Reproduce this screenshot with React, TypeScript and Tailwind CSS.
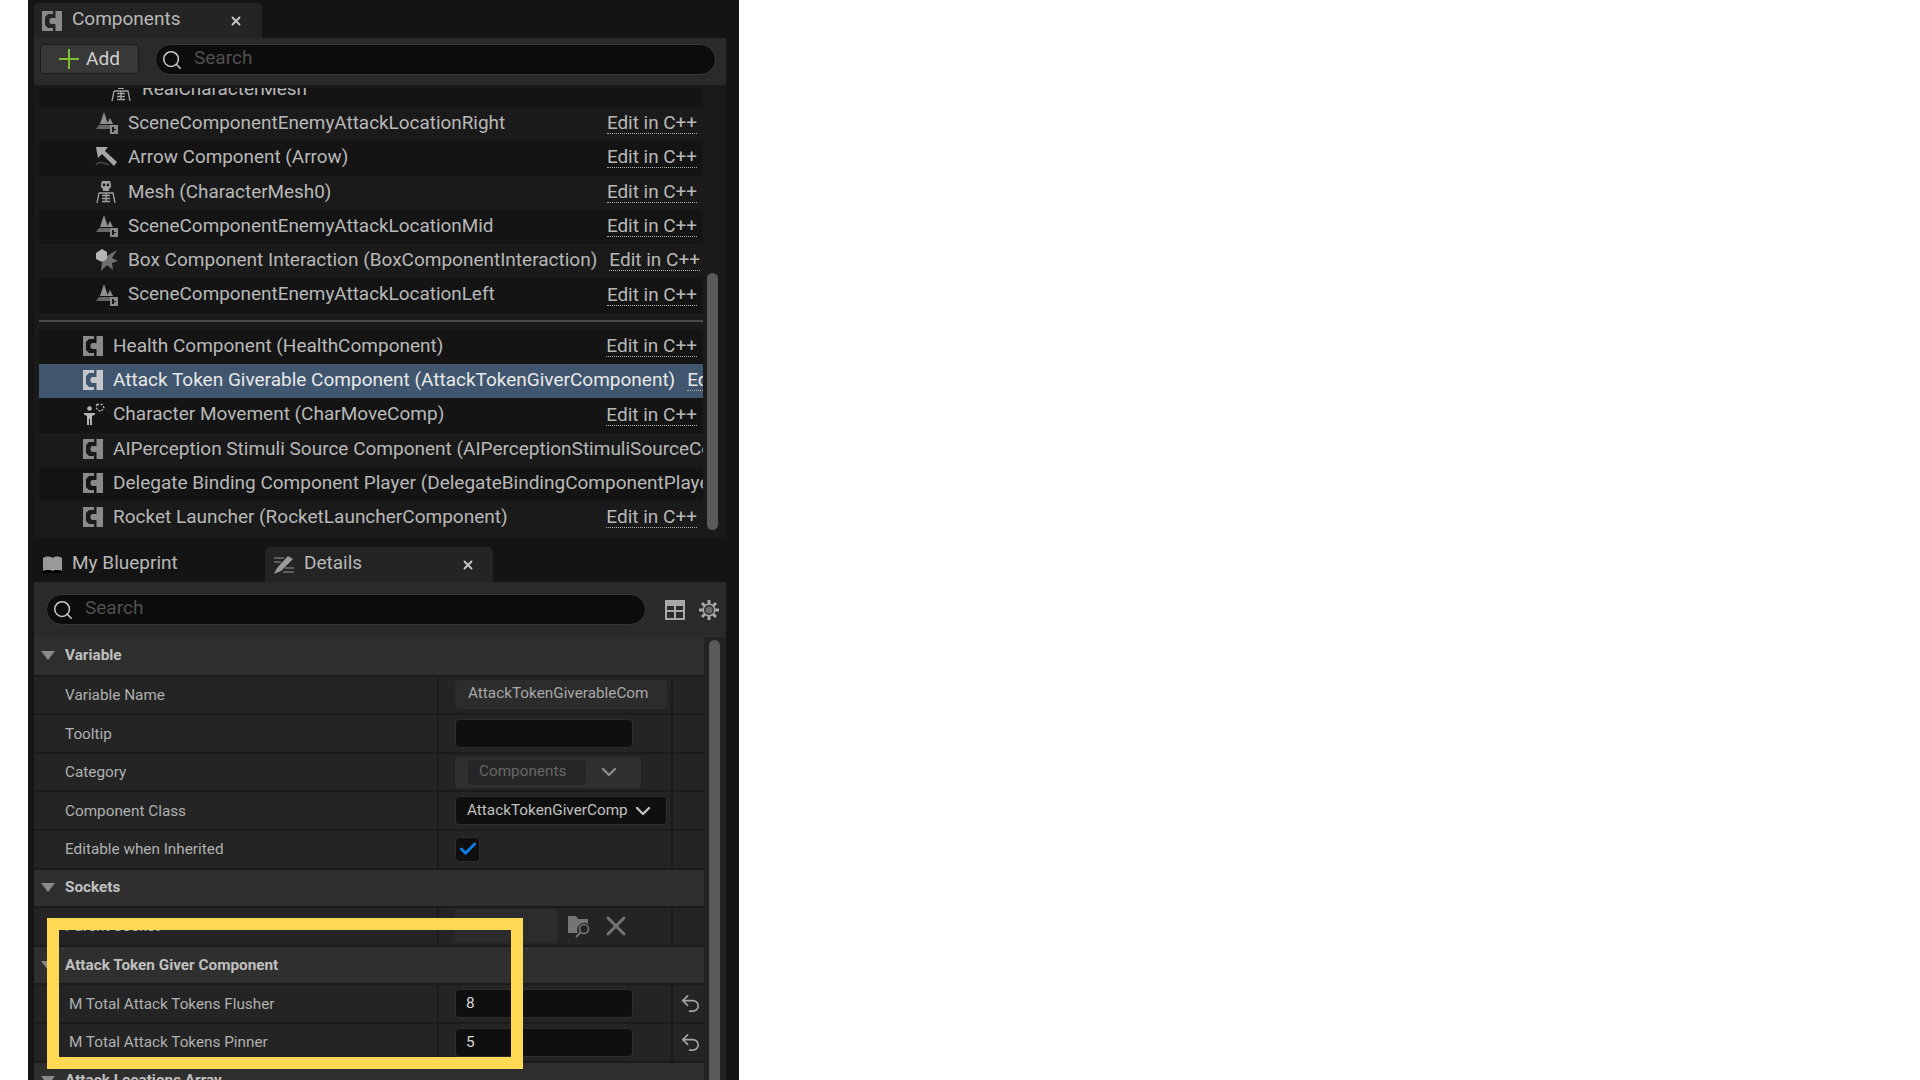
import { Check, ChevronDown, Search, X, Undo2 } from 'lucide-react';

const font = { fontFamily: 'Roboto, sans-serif' };

function ComponentGlyph({ size = 20, color = '#8a8a8a' }: { size?: number; color?: string }) {
  return (
    <svg width={size} height={size} viewBox="0 0 20 20" className="shrink-0">
      <path
        fill={color}
        fillRule="evenodd"
        d="M0 0H20V20H0ZM11 0V3H6L3 6V14L6 17H11V20H13.5V13H9L7.5 11.5V8.5L9 7H13.5V0Z"
      />
    </svg>
  );
}

function SceneIcon() {
  return (
    <svg width={24} height={24} viewBox="0 0 24 24" className="shrink-0">
      <path fill="#8f8f8f" d="M9 1L13 13H5Z" />
      <path fill="#8f8f8f" d="M15 7L18 13H12Z" />
      <path fill="#666" d="M4 14H15V18H1Z" />
      <rect x="15" y="14" width="8" height="9" fill="#1a1a1a" />
      <path fill="#8a8a8a" fillRule="evenodd" d="M15 14H23V23H15ZM17 16V21H19V19H21V18H19V16Z" />
    </svg>
  );
}

function ArrowIcon() {
  return (
    <svg width={24} height={24} viewBox="0 0 24 24" className="shrink-0">
      <path fill="#a5a5a5" d="M1 2H13L10 6L22 17L19 21L7 9L3 13Z" />
      <path fill="none" stroke="#444" strokeWidth="1.5" d="M1 20C4 15 8 18 14 20" />
    </svg>
  );
}

function SkeletonIcon({ color = '#a0a0a0' }: { color?: string }) {
  return (
    <svg width={22} height={24} viewBox="0 0 22 24" className="shrink-0">
      <path fill={color} d="M7 1H15L16 4V7L14 9V11H8V9L6 7V4Z" />
      <circle cx="9" cy="5" r="1.4" fill="#1a1a1a" />
      <circle cx="13" cy="5" r="1.4" fill="#1a1a1a" />
      <path fill="none" stroke={color} strokeWidth="1.3" d="M4 13H18L20 23M4 13L2 23M7 15.5H15M7 18.5H15M7 21.5H15M11 13V22" />
    </svg>
  );
}

function BoxHitIcon() {
  return (
    <svg width={24} height={24} viewBox="0 0 24 24" className="shrink-0">
      <path fill="#6f6f6f" d="M12 8L22 2L17 10L23 13L17 15L18 22L12 17L6 23L7 15Z" />
      <path fill="#b5b5b5" d="M1 5L7 1L12 4V11L7 14L1 11Z" />
    </svg>
  );
}

function MovementIcon() {
  return (
    <svg width={24} height={24} viewBox="0 0 24 24" className="shrink-0">
      <circle cx="6.5" cy="5.5" r="2.3" fill="#b5b5b5" />
      <path fill="#b5b5b5" d="M1 10H12V11.5L9 13V22H7V16H6V22H4V13L1 11.5Z" />
      <path fill="none" stroke="#b5b5b5" strokeWidth="1.4" strokeDasharray="2 1.6" d="M14 1.5L19 1.5L21 5L18 8.5L14.5 7L13 4Z" />
    </svg>
  );
}

function EditLink({ cut }: { cut?: boolean }) {
  return (
    <span className="shrink-0 border-b border-dotted border-[#b0b0b0] leading-[21px]">
      {cut ? 'Ed' : 'Edit in C++'}
    </span>
  );
}

type TreeRow = {
  label: string;
  icon: React.ReactNode;
  edit?: boolean;
  selected?: boolean;
  striped?: boolean;
  inset: 'deep' | 'shallow';
  gap?: boolean;
};

const sceneRows: TreeRow[] = [
  { label: 'SceneComponentEnemyAttackLocationRight', icon: <SceneIcon />, edit: true, inset: 'deep' },
  { label: 'Arrow Component (Arrow)', icon: <ArrowIcon />, edit: true, striped: true, inset: 'deep' },
  { label: 'Mesh (CharacterMesh0)', icon: <SkeletonIcon />, edit: true, inset: 'deep' },
  { label: 'SceneComponentEnemyAttackLocationMid', icon: <SceneIcon />, edit: true, striped: true, inset: 'deep' },
  { label: 'Box Component Interaction (BoxComponentInteraction)', icon: <BoxHitIcon />, edit: true, gap: true, inset: 'deep' },
  { label: 'SceneComponentEnemyAttackLocationLeft', icon: <SceneIcon />, edit: true, striped: true, inset: 'deep' },
];

const actorRows: TreeRow[] = [
  { label: 'Health Component (HealthComponent)', icon: <ComponentGlyph />, edit: true, striped: true, inset: 'shallow' },
  { label: 'Attack Token Giverable Component (AttackTokenGiverComponent)', icon: <ComponentGlyph color="#c4c8cc" />, edit: true, selected: true, inset: 'shallow' },
  { label: 'Character Movement (CharMoveComp)', icon: <MovementIcon />, edit: true, striped: true, inset: 'shallow' },
  { label: 'AIPerception Stimuli Source Component (AIPerceptionStimuliSourceComponent)', icon: <ComponentGlyph />, inset: 'shallow' },
  { label: 'Delegate Binding Component Player (DelegateBindingComponentPlayer)', icon: <ComponentGlyph />, striped: true, inset: 'shallow' },
  { label: 'Rocket Launcher (RocketLauncherComponent)', icon: <ComponentGlyph />, edit: true, inset: 'shallow' },
];

function Row({ row }: { row: TreeRow }) {
  const bg = row.selected ? 'bg-[#40566f] text-[#e8e8e8]' : row.striped ? 'bg-[#141414] text-[#b8b8b8]' : 'bg-[#1a1a1a] text-[#b8b8b8]';
  const size = row.inset === 'deep' && !row.gap ? 'text-[18.9px]' : 'text-[19px]';
  return (
    <div className={`h-[34.3px] pb-[2px] flex items-center overflow-hidden whitespace-nowrap ${size} ${bg} ${row.inset === 'deep' ? 'pl-[56px]' : 'pl-[44px]'}`}>
      <span className={`flex justify-start shrink-0 ${row.inset === 'deep' ? 'w-[33px]' : 'w-[30px]'}`}>{row.icon}</span>
      <span className="shrink-0">{row.label}</span>
      {row.edit && (
        <span className={`flex-1 flex pr-[6px] ${row.selected || row.gap ? 'pl-[12px] justify-start' : 'justify-end'}`}>
          <EditLink cut={row.selected} />
        </span>
      )}
    </div>
  );
}

function SearchBox({ width }: { width: string }) {
  return (
    <div className={`${width} h-[31px] rounded-full bg-[#0c0c0c] border border-[#383838] flex items-center pl-[5px] gap-[11px] shrink-0`}>
      <Search size={22} strokeWidth={1.7} className="text-[#c8c8c8]" />
      <span className="text-[19px] text-[#505050] pb-[2px]">Search</span>
    </div>
  );
}

function SectionHeader({ label, top }: { label: string; top?: boolean }) {
  return (
    <div className={`${top ? 'h-[39.6px]' : 'h-[38.6px]'} bg-[#2f2f2f] border-b-2 border-[#1b1b1b] flex items-center pl-[7px]`}>
      <span className="w-0 h-0 border-l-[7px] border-r-[7px] border-t-[9px] border-l-transparent border-r-transparent border-t-[#8a8a8a]" />
      <span className="ml-[10px] text-[15.3px] font-bold text-[#c0c0c0]">{label}</span>
    </div>
  );
}

function PropRow({ label, children, reset, indent }: { label: string; children?: React.ReactNode; reset?: boolean; indent?: boolean }) {
  return (
    <div className="h-[38.6px] bg-[#242424] border-b-2 border-[#1b1b1b] flex text-[15.3px] text-[#b0b0b0]">
      <div className={`w-[405px] shrink-0 flex items-center pt-[1px] border-r-2 border-[#1b1b1b] ${indent ? 'pl-[35px]' : 'pl-[31px]'}`}>{label}</div>
      <div className="w-[234px] shrink-0 flex items-center gap-[10px] pl-[16px] border-r-2 border-[#1b1b1b]">{children}</div>
      <div className="flex-1 flex items-center justify-center pl-[3px]">
        {reset && <Undo2 size={23} strokeWidth={1.7} className="text-[#a5a5a5]" />}
      </div>
    </div>
  );
}

function ValueBox({ width, children, muted }: { width: string; children?: React.ReactNode; muted?: boolean }) {
  return (
    <div className={`${width} h-[29px] rounded-[4px] border ${muted ? 'bg-[#2c2c2c] border-[#2c2c2c] text-[#777]' : 'bg-[#0f0f0f] border-[#2d2d2d] text-[#c0c0c0]'} flex items-center`}>
      {children}
    </div>
  );
}

function GridIcon() {
  return (
    <svg width={20} height={20} viewBox="0 0 20 20">
      <path fill="#a8a8a8" fillRule="evenodd" d="M0 0H20V20H0ZM2 6V10H9V6ZM11 6V10H18V6ZM2 12V18H9V12ZM11 12V18H18V12Z" />
    </svg>
  );
}

function GearIcon() {
  return (
    <svg width={22} height={22} viewBox="0 0 22 22">
      <g stroke="#a8a8a8" strokeWidth="3">
        <path d="M11 1V21M1 11H21M4 4L18 18M18 4L4 18" />
      </g>
      <circle cx="11" cy="11" r="6.5" fill="#a8a8a8" />
      <circle cx="11" cy="11" r="5" fill="#2a2a2a" />
      <circle cx="11" cy="11" r="3.6" fill="#6a6a6a" />
    </svg>
  );
}

function TabClose() {
  return <X size={14} strokeWidth={3.2} className="text-[#c4c4c4]" />;
}

export default function App() {
  return (
    <div className="w-[1920px] h-[1080px] bg-white overflow-hidden" style={font}>
      <div className="relative ml-[28px] w-[711px] h-full bg-[#141414] pl-[6px] pr-[13px] pt-[3px]">
        {/* Components panel */}
        <div className="h-[35px] flex">
          <div className="w-[228px] bg-[#242424] rounded-t-[5px] flex items-center pl-[8px] pr-[19px]">
            <ComponentGlyph size={20} />
            <span className="ml-[10px] pb-[2px] text-[19px] text-[#b8b8b8] flex-1">Components</span>
            <TabClose />
          </div>
        </div>
        <div className="h-[47px] bg-[#2a2a2a] flex items-start pt-[6px] pl-[6px] pr-[10px] gap-[16px]">
          <div className="w-[99px] h-[30px] shrink-0 bg-[#383838] border border-[#1a1a1a] rounded-[4px] flex items-center justify-center gap-[7px] text-[19px] text-[#d0d0d0]">
            <svg width={20} height={20} viewBox="0 0 20 20">
              <path fill="#7ec02f" d="M9 0H11V9H20V11H11V20H9V11H0V9H9Z" />
            </svg>
            Add
          </div>
          <SearchBox width="w-[561px]" />
        </div>
        <div className="h-[453px] bg-[#1a1a1a] pl-[5px] pt-[3px] flex overflow-hidden">
          <div className="w-[664px] shrink-0 overflow-hidden">
            <div className="-mt-[14px]">
              <div className="h-[33px] pb-[2px] bg-[#141414] flex items-center pl-[71px] text-[18.9px] text-[#b8b8b8]">
                <span className="w-[20px] mr-[12px] shrink-0"><SkeletonIcon /></span>
                <span>RealCharacterMesh</span>
              </div>
              {sceneRows.map((row) => <Row key={row.label} row={row} />)}
              <div className="h-[16px] flex items-center">
                <div className="w-full h-[2px] bg-[#4a4a4a]" />
              </div>
              <div className="h-[1px]" />
              {actorRows.map((row) => <Row key={row.label} row={row} />)}
            </div>
          </div>
          <div className="flex-1 pt-[185px] pl-[4px] pr-[6px]">
            <div className="w-[11px] h-[257px] rounded-full bg-[#5a5a5a]" />
          </div>
        </div>

        {/* Details panel */}
        <div className="h-[9px]" />
        <div className="h-[35px] flex text-[19px] text-[#b8b8b8]">
          <div className="w-[231px] flex items-center pl-[8px]">
            <svg width={21} height={20} viewBox="0 0 21 20" className="shrink-0">
              <path fill="#999" d="M1 3C4 1 8 1 10.5 3C13 1 17 1 20 3V16C17 14.5 13 14.5 10.5 16C8 14.5 4 14.5 1 16Z" />
              <path fill="#000" d="M1 16C4 14.5 8 14.5 10.5 16C13 14.5 17 14.5 20 16V18H1Z" />
            </svg>
            <span className="ml-[9px] pb-[2px]">My Blueprint</span>
          </div>
          <div className="w-[228px] bg-[#242424] rounded-t-[5px] flex items-center pl-[8px] pr-[18px]">
            <svg width={22} height={22} viewBox="0 0 22 22" className="shrink-0">
              <path fill="#9a9a9a" d="M1 20L4 14L15 2L20 5L8 17Z" />
              <path stroke="#707070" strokeWidth="1.5" d="M1 4H11M1 8H8M12 14H21M10 18H21" />
            </svg>
            <span className="ml-[9px] pb-[2px] flex-1">Details</span>
            <TabClose />
          </div>
        </div>
        <div className="h-[55px] bg-[#2a2a2a] flex items-center pl-[12px]">
          <SearchBox width="w-[600px]" />
          <span className="ml-[19px]"><GridIcon /></span>
          <span className="ml-[13px]"><GearIcon /></span>
        </div>
        <div className="flex bg-[#222222]">
          <div className="w-[670px] shrink-0">
            <SectionHeader label="Variable" top />
            <PropRow label="Variable Name">
              <ValueBox width="w-[212px]" muted><span className="pl-[12px] pb-[2px] text-[#a8a8a8]">AttackTokenGiverableCom</span></ValueBox>
            </PropRow>
            <PropRow label="Tooltip"><ValueBox width="w-[178px]" /></PropRow>
            <PropRow label="Category">
              <div className="w-[186px] h-[31px] rounded-[4px] bg-[#2f2f2f] flex items-center pl-[13px] gap-[11px] text-[#666666]">
                <span className="w-[118px] h-[25px] pl-[11px] pb-[2px] bg-[#262626] rounded-[4px] flex items-center">Components</span>
                <ChevronDown size={24} strokeWidth={2.4} className="text-[#8a8a8a]" />
              </div>
            </PropRow>
            <PropRow label="Component Class">
              <ValueBox width="w-[212px]">
                <span className="pl-[11px]">AttackTokenGiverComp</span>
                <ChevronDown size={24} strokeWidth={2.4} className="ml-[3px] text-[#c0c0c0]" />
              </ValueBox>
            </PropRow>
            <PropRow label="Editable when Inherited">
              <div className="w-[25px] h-[25px] bg-[#0f0f0f] border border-[#2d2d2d] rounded-[4px] flex items-center justify-center">
                <Check size={20} strokeWidth={3.4} className="text-[#0f7fe6]" />
              </div>
            </PropRow>
            <SectionHeader label="Sockets" />
            <PropRow label="Parent Socket">
              <div className="w-[103px] h-[34px] bg-[#2c2c2c] rounded-[4px]" />
              <svg width={24} height={24} viewBox="0 0 24 24" className="shrink-0">
                <path fill="#757575" d="M0 2H8L10 5H20V10A7 7 0 0 0 10 19H0Z" />
                <circle cx="16" cy="15" r="4.5" fill="none" stroke="#757575" strokeWidth="1.6" />
                <path stroke="#757575" strokeWidth="2" d="M12.5 18.5L8 23" />
              </svg>
              <X size={32} strokeWidth={2.2} className="-ml-[2px] text-[#757575] shrink-0" />
            </PropRow>
            <SectionHeader label="Attack Token Giver Component" />
            <PropRow label="M Total Attack Tokens Flusher" reset indent>
              <ValueBox width="w-[178px]"><span className="pl-[10px] text-[#d8d8d8]">8</span></ValueBox>
            </PropRow>
            <PropRow label="M Total Attack Tokens Pinner" reset indent>
              <ValueBox width="w-[178px]"><span className="pl-[10px] text-[#d8d8d8]">5</span></ValueBox>
            </PropRow>
            <SectionHeader label="Attack Locations Array" />
          </div>
          <div className="pl-[5px] pt-[3px]">
            <div className="w-[11px] h-[500px] bg-[#5a5a5a] rounded-t-full" />
          </div>
        </div>
      </div>

      {/* callout drawn over the screenshot */}
      <div className="absolute left-[47px] top-[918px] w-[476px] h-[151px] border-[12px] border-[#ffd954]" />
    </div>
  );
}
